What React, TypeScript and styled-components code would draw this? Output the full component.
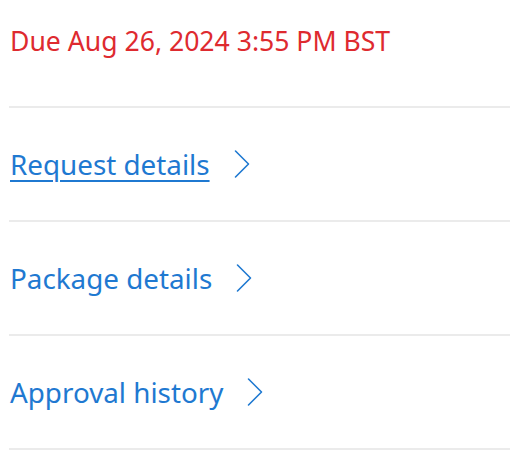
import React from "react";
import styled, { createGlobalStyle } from "styled-components";

const GlobalStyle = createGlobalStyle`
  body {
    margin: 0;
    background: #ffffff;
    font-family: "Noto Sans", "Open Sans", sans-serif;
  }
`;

const Page = styled.div`
  width: 510px;
  padding-left: 9px;
  box-sizing: border-box;
`;

const Header = styled.div`
  height: 108px;
  border-bottom: 2px solid #ebebeb;
  padding-top: 22px;
  box-sizing: border-box;
`;

const DueText = styled.div`
  color: #de2a2f;
  font-size: 26.6px;
  line-height: 38px;
  padding-left: 1px;
`;

const Row = styled.div`
  height: 114px;
  border-bottom: 2px solid #ebebeb;
  box-sizing: border-box;
  display: flex;
  align-items: center;
  gap: 24px;
  padding-left: 1px;
`;

const RowLink = styled.a<{ $active?: boolean }>`
  color: #1f79d1;
  font-size: 27.8px;
  line-height: 38px;
  text-decoration: ${(p) => (p.$active ? "underline" : "none")};
  text-decoration-thickness: 2px;
  text-underline-offset: 5px;
  cursor: pointer;
`;

const Chevron = () => (
  <svg width="16" height="30" viewBox="0 0 16 30" fill="none">
    <polyline
      points="1.5,2 14.5,15 1.5,28"
      stroke="#1f79d1"
      strokeWidth="1.6"
      strokeLinecap="round"
      strokeLinejoin="round"
    />
  </svg>
);

const items = [
  { label: "Request details", active: true },
  { label: "Package details", active: false },
  { label: "Approval history", active: false },
];

export default function App() {
  return (
    <>
      <GlobalStyle />
      <Page>
        <Header>
          <DueText>Due Aug 26, 2024 3:55 PM BST</DueText>
        </Header>
        {items.map((item) => (
          <Row key={item.label}>
            <RowLink $active={item.active}>{item.label}</RowLink>
            <Chevron />
          </Row>
        ))}
      </Page>
    </>
  );
}
